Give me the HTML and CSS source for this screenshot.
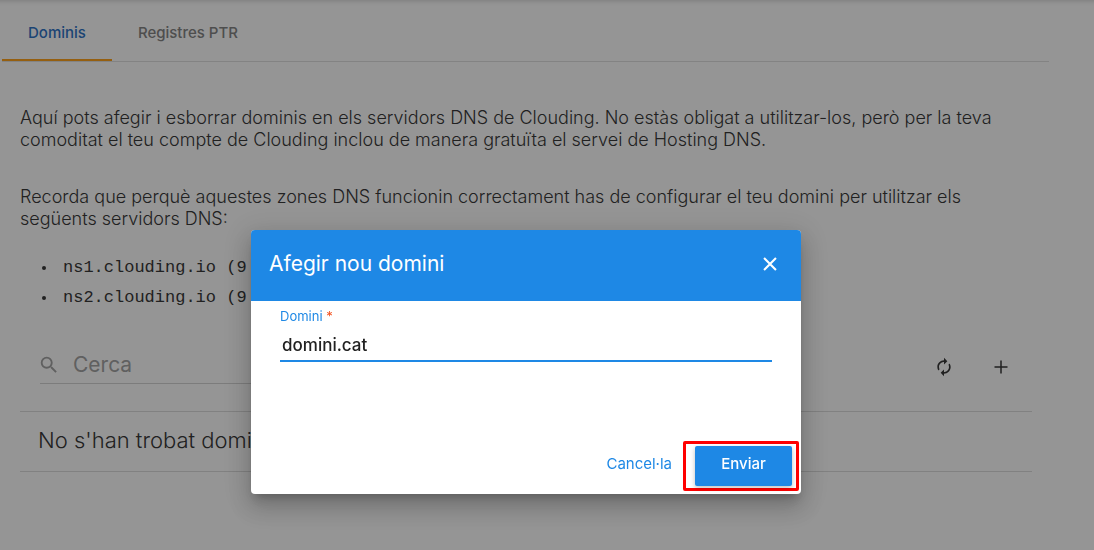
FILE: index.html
```
<!DOCTYPE html>
<html lang="ca">
<head>
    <meta charset="UTF-8">
    <meta name="viewport" content="width=device-width, initial-scale=1.0">
    <title>Dominis</title>
    <link rel="stylesheet" href="styles.css">
</head>
<body>

<main class="page">
    <nav class="tabs">
        <a class="tab active" href="#dominis">Dominis</a>
        <a class="tab" href="#ptr">Registres PTR</a>
    </nav>

    <section class="content">
        <p>Aquí pots afegir i esborrar dominis en els servidors DNS de Clouding. No estàs obligat a utilitzar-los, però per la teva<br>comoditat el teu compte de Clouding inclou de manera gratuïta el servei de Hosting DNS.</p>
        <p>Recorda que perquè aquestes zones DNS funcionin correctament has de configurar el teu domini per utilitzar els<br>següents servidors DNS:</p>
        <ul class="servers">
            <li>ns1.clouding.io (9</li>
            <li>ns2.clouding.io (9</li>
        </ul>

        <div class="toolbar">
            <label class="search">
                <svg width="22" height="22" viewBox="0 0 24 24" aria-label="Cerca"><path fill="currentColor" d="M15.5 14h-.79l-.28-.27A6.47 6.47 0 0 0 16 9.5 6.5 6.5 0 1 0 9.5 16c1.61 0 3.09-.59 4.23-1.57l.27.28v.79l5 4.99L20.49 19l-4.99-5zm-6 0C7.01 14 5 11.99 5 9.5S7.01 5 9.5 5 14 7.01 14 9.5 11.99 14 9.5 14z"/></svg>
                <input type="text" placeholder="Cerca">
            </label>
            <button class="icon-button" aria-label="Actualitza">
                <svg width="20" height="20" viewBox="0 0 24 24"><path fill="currentColor" d="M12 6v3l4-4-4-4v3c-4.42 0-8 3.58-8 8 0 1.57.46 3.03 1.24 4.26L6.7 14.8A5.87 5.87 0 0 1 6 12c0-3.31 2.69-6 6-6zm6.76 1.74L17.3 9.2c.44.84.7 1.79.7 2.8 0 3.31-2.69 6-6 6v-3l-4 4 4 4v-3c4.42 0 8-3.58 8-8 0-1.57-.46-3.03-1.24-4.26z"/></svg>
            </button>
            <button class="icon-button" aria-label="Afegeix">
                <svg width="14" height="14" viewBox="0 0 14 14"><path fill="none" stroke="currentColor" stroke-width="1.5" d="M7 0.5v13M0.5 7h13"/></svg>
            </button>
        </div>

        <div class="empty">No s'han trobat dominis</div>
    </section>
</main>

<div class="backdrop">
    <form class="dialog" role="dialog" aria-labelledby="dialogTitle">
        <header class="dialog-header">
            <h2 id="dialogTitle">Afegir nou domini</h2>
            <button class="close" type="button" aria-label="Tanca">
                <svg width="22" height="22" viewBox="0 0 24 24"><path fill="none" stroke="currentColor" stroke-width="2.3" d="M5.5 5.5l13 13M18.5 5.5l-13 13"/></svg>
            </button>
        </header>
        <div class="dialog-body">
            <label for="domini">Domini <span class="required">*</span></label>
            <input type="text" id="domini" value="domini.cat">
        </div>
        <footer class="dialog-actions">
            <button class="cancel" type="button">Cancel·la</button>
            <div class="highlight">
                <button class="submit" type="button">Enviar</button>
            </div>
        </footer>
    </form>
</div>

</body>
</html>
```
FILE: styles.css
```
* {
    box-sizing: border-box;
}
body {
    margin: 0;
    background-color: #fff;
    color: #212121;
    font-family: Inter, Roboto, sans-serif;
    font-size: 18px;
    line-height: 22px;
}
button, input {
    font-family: inherit;
    border: 0;
    background: none;
    padding: 0;
}
button {
    cursor: pointer;
}
svg {
    display: block;
    flex: none;
}
.page {
    height: 100vh;
    overflow: hidden;
    padding: 0 45px 0 2px;
    box-shadow: inset 0 6px 5px -5px rgba(0,0,0,0.2);
}
.tabs {
    display: flex;
    border-bottom: 1px solid #dcdcdc;
}
.tab {
    padding: 22px 26px 15px;
    border-bottom: 2px solid transparent;
    color: #777;
    font-size: 15px;
    font-weight: 500;
    text-decoration: none;
}
.tab.active {
    color: #1565c0;
    border-bottom-color: #ff9800;
}
.content {
    padding: 45px 17px 0 18px;
    font-weight: 300;
}
.content p {
    margin: 0 0 35px;
    white-space: nowrap;
}
.servers {
    margin: -12px 0 0;
    padding: 0 0 0 22px;
    font-family: "Liberation Mono", monospace;
    font-size: 17px;
    line-height: 30px;
    list-style: none;
}
.servers li {
    display: flex;
    align-items: center;
    gap: 17px;
}
.servers li::before {
    content: "";
    width: 4px;
    height: 4px;
    border-radius: 50%;
    background-color: #212121;
}
.toolbar {
    display: flex;
    align-items: center;
    gap: 17px;
    padding: 32px 11px 26px 20px;
}
.search {
    display: flex;
    align-items: center;
    width: 50%;
    height: 38px;
    margin-right: auto;
    border-bottom: 1px solid #d0d0d0;
    color: #999;
}
.search svg {
    margin-left: -2px;
}
.search input {
    flex: 1;
    margin-left: 13px;
    font-size: 21px;
}
.search input::placeholder {
    color: #999;
    opacity: 1;
}
.icon-button {
    display: flex;
    align-items: center;
    justify-content: center;
    width: 40px;
    height: 40px;
    padding-top: 3px;
    color: #212121;
}
.empty {
    padding: 17px 18px 20px;
    border-top: 1px solid #d8d8d8;
    border-bottom: 1px solid #d8d8d8;
    font-size: 22px;
}
.backdrop {
    position: fixed;
    inset: 0;
    display: flex;
    align-items: center;
    justify-content: center;
    padding: 174px 42px 0 0;
    background-color: rgba(33,33,33,0.48);
}
.dialog {
    width: 550px;
    background-color: #fff;
    border-radius: 4px;
    box-shadow: 0 7px 9px -4px rgba(0,0,0,0.2), 0 14px 21px 2px rgba(0,0,0,0.14), 0 5px 26px 4px rgba(0,0,0,0.12);
    overflow: hidden;
}
.dialog-header {
    display: flex;
    align-items: center;
    justify-content: space-between;
    height: 71px;
    padding: 0 20px 3px 18px;
    background-color: #1e88e5;
    color: #fff;
}
.dialog-header h2 {
    margin: 0;
    font-size: 21px;
    font-weight: 400;
}
.close {
    color: #fff;
}
.dialog-body {
    display: flex;
    flex-direction: column;
    padding: 6px 29px 79px;
}
.dialog-body label {
    color: #1e88e5;
    font-size: 13px;
    line-height: 18px;
}
.required {
    color: #f4511e;
}
.dialog-body input {
    height: 37px;
    padding: 4px 2px 0;
    border-bottom: 2px solid #1e88e5;
    color: #212121;
    font-size: 17px;
    font-weight: 500;
    outline: none;
}
.dialog-actions {
    display: flex;
    align-items: center;
    justify-content: flex-end;
    gap: 11px;
    padding: 0 2px 3px;
}
.dialog-actions button {
    padding-bottom: 5px;
    font-size: 15px;
    font-weight: 500;
}
.dialog-actions .cancel {
    color: #1e88e5;
    font-weight: 400;
    font-feature-settings: "locl" 0, "calt" 0;
}
/* frame around the submit button */
.highlight {
    padding: 2px 4px 2px 9px;
    border: 3px solid #f00;
    border-radius: 2px;
}
.submit {
    display: block;
    width: 97px;
    height: 40px;
    border-radius: 2px;
    background-color: #1e88e5;
    color: #fff;
    box-shadow: 0 2px 5px rgba(0,0,0,0.26);
}
```
